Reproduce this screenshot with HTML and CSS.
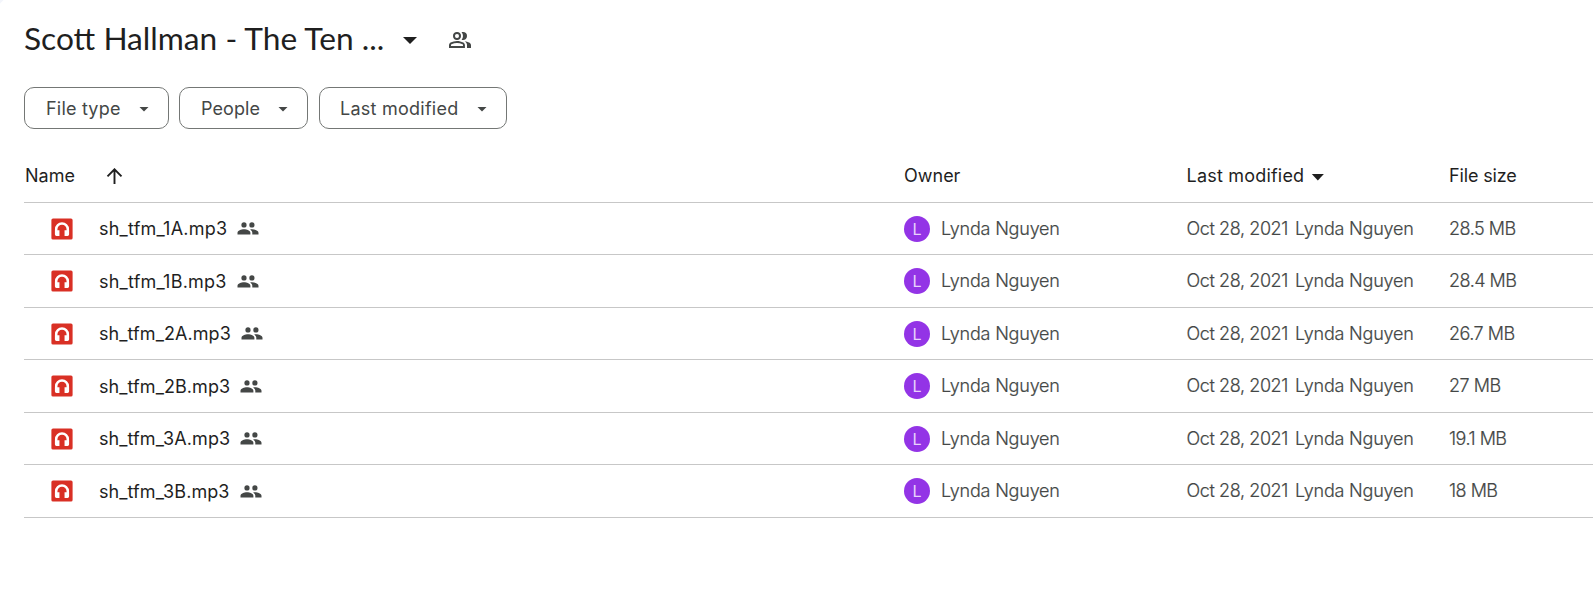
FILE: index.html
```html
<!DOCTYPE html>
<html lang="en">
<head>
<meta charset="utf-8">
<title>Scott Hallman - The Ten ...</title>
<link rel="stylesheet" href="styles.css">
</head>
<body>
<svg class="defs" width="0" height="0" aria-hidden="true">
  <symbol id="audio" viewBox="0 0 22 22">
    <rect x=".4" y=".4" width="21.2" height="21.2" rx="1.6" fill="#d93025"/>
    <path d="M5.200 16.500v-5.300a5.800 5.800 0 0 1 11.600 0v5.300" fill="none" stroke="#fff" stroke-width="2.500"/>
    <path d="M3.950 12.200h4.500v5.700H5.400a1.500 1.500 0 0 1-1.450-1.500zM13.550 12.200h4.500v4.200a1.500 1.500 0 0 1-1.450 1.500h-3.050z" fill="#fff"/>
  </symbol>
  <symbol id="shared" viewBox="0 0 22 13">
    <circle cx="7" cy="2.900" r="2.600"/><circle cx="14.900" cy="2.900" r="2.600"/>
    <path d="M.5 12.500v-1.700C.5 8.500 4.300 7.300 7 7.300s6.400 1.200 6.400 3.500v1.700zM13.100 7.500c.6-.1 1.300-.2 1.900-.2 2.700 0 6.500 1.200 6.500 3.500v1.700h-6.200v-1.700c0-1.500-.9-2.500-2.200-3.300z"/>
  </symbol>
</svg>
<main class="page">
  <header class="title-bar">
    <h1 class="title">Scott Hallman - The Ten ...</h1>
    <span class="caret caret-title"></span>
    <svg class="people" viewBox="0 0 24 24"><path d="M1 20v-2.800c0-.6.150-1.080.430-1.550.29-.47.670-.82 1.150-1.080 1-.5 2.020-.880 3.050-1.130A14 14 0 0 1 9 13c1.100 0 2.200.150 3.250.420 1.050.260 2.080.640 3.100 1.150.48.250.86.600 1.150 1.070.28.470.430.990.430 1.560V20zm18 0v-3c0-.730-.200-1.440-.610-2.110a5.200 5.200 0 0 0-1.740-1.740c.85.100 1.650.270 2.400.510.75.240 1.450.540 2.100.890.600.330 1.060.700 1.370 1.110.320.410.480.860.480 1.340v3zM9 12a3.850 3.850 0 0 1-4-4 3.850 3.850 0 0 1 4-4 3.850 3.850 0 0 1 4 4 3.850 3.850 0 0 1-4 4zm10-4a3.850 3.850 0 0 1-4 4c-.180 0-.420-.020-.700-.060a6 6 0 0 1-.700-.160A5.800 5.800 0 0 0 15 8a5.800 5.800 0 0 0-1.400-3.780c.230-.080.470-.140.700-.170.230-.030.470-.050.700-.050a3.850 3.850 0 0 1 4 4zM3 18h12v-.800a.940.940 0 0 0-.500-.850 12 12 0 0 0-2.720-1.010 11.500 11.500 0 0 0-5.560 0c-.920.220-1.820.560-2.720 1.010a.940.940 0 0 0-.500.850zm6-8a1.930 1.930 0 0 0 2-2 1.930 1.930 0 0 0-2-2 1.930 1.930 0 0 0-2 2 1.930 1.930 0 0 0 2 2z" fill-rule="evenodd"/></svg>
  </header>
  <nav class="chips">
    <div class="chip chip-type"><span>File type</span><i class="caret"></i></div>
    <div class="chip chip-people"><span>People</span><i class="caret"></i></div>
    <div class="chip chip-modified"><span>Last modified</span><i class="caret"></i></div>
  </nav>
  <section class="files">
    <div class="row head">
      <div class="name-head"><span>Name</span><svg class="arrow" viewBox="0 0 16 16"><path d="M8 16V1.500M1 8.300 8 1.300l7 7"/></svg></div>
      <div>Owner</div>
      <div class="sort">Last modified<i class="caret caret-sort"></i></div>
      <div>File size</div>
    </div>
    <div class="row">
      <div class="name wide"><svg class="audio"><use href="#audio"/></svg><span>sh_tfm_1A.mp3</span><svg class="shared"><use href="#shared"/></svg></div>
      <div class="owner"><b class="avatar">L</b><span>Lynda Nguyen</span></div>
      <div class="date"><span>Oct 28, 2021</span><span>Lynda Nguyen</span></div>
      <div class="size">28.5 MB</div>
    </div>
    <div class="row tall">
      <div class="name wide"><svg class="audio"><use href="#audio"/></svg><span>sh_tfm_1B.mp3</span><svg class="shared"><use href="#shared"/></svg></div>
      <div class="owner"><b class="avatar">L</b><span>Lynda Nguyen</span></div>
      <div class="date"><span>Oct 28, 2021</span><span>Lynda Nguyen</span></div>
      <div class="size">28.4 MB</div>
    </div>
    <div class="row">
      <div class="name"><svg class="audio"><use href="#audio"/></svg><span>sh_tfm_2A.mp3</span><svg class="shared"><use href="#shared"/></svg></div>
      <div class="owner"><b class="avatar">L</b><span>Lynda Nguyen</span></div>
      <div class="date"><span>Oct 28, 2021</span><span>Lynda Nguyen</span></div>
      <div class="size">26.7 MB</div>
    </div>
    <div class="row tall">
      <div class="name"><svg class="audio"><use href="#audio"/></svg><span>sh_tfm_2B.mp3</span><svg class="shared"><use href="#shared"/></svg></div>
      <div class="owner"><b class="avatar">L</b><span>Lynda Nguyen</span></div>
      <div class="date"><span>Oct 28, 2021</span><span>Lynda Nguyen</span></div>
      <div class="size">27 MB</div>
    </div>
    <div class="row">
      <div class="name"><svg class="audio"><use href="#audio"/></svg><span>sh_tfm_3A.mp3</span><svg class="shared"><use href="#shared"/></svg></div>
      <div class="owner"><b class="avatar">L</b><span>Lynda Nguyen</span></div>
      <div class="date"><span>Oct 28, 2021</span><span>Lynda Nguyen</span></div>
      <div class="size">19.1 MB</div>
    </div>
    <div class="row tall">
      <div class="name"><svg class="audio"><use href="#audio"/></svg><span>sh_tfm_3B.mp3</span><svg class="shared"><use href="#shared"/></svg></div>
      <div class="owner"><b class="avatar">L</b><span>Lynda Nguyen</span></div>
      <div class="date"><span>Oct 28, 2021</span><span>Lynda Nguyen</span></div>
      <div class="size">18 MB</div>
    </div>
  </section>
</main>
</body>
</html>
```
FILE: styles.css
```css
* { box-sizing: border-box; }
body {
  margin: 0;
  height: 591px;
  overflow: hidden;
  background: #f8fafd;
  color: #1f1f1f;
  font: 18px/24px Inter, sans-serif;
  white-space: nowrap;
}
.defs { display: block; }
.page {
  height: 591px;
  padding-left: 24px;
  background: linear-gradient(135deg, #f3f5fb 2px, #fff 3px);
}
.title-bar { display: flex; align-items: center; height: 80px; }
.title {
  width: 379px;
  margin: 0;
  padding-bottom: 4px;
  font: 400 31.700px/40px Lato, sans-serif;
}
.caret {
  width: 10px;
  height: 5px;
  background: currentColor;
  clip-path: polygon(0 0, 100% 0, 50% 100%);
}
.caret-title { width: 14px; height: 7px; margin-top: 1px; }
.people { width: 24px; height: 24px; margin-left: 31px; fill: #444746; }

.chips { display: flex; margin-top: 7px; color: #444746; letter-spacing: .1px; }
.chip {
  display: flex;
  align-items: center;
  justify-content: space-between;
  height: 42px;
  padding: 1px 19px 0 21px;
  border: 1px solid #747775;
  border-radius: 10px;
}
.chip .caret { margin-top: 1px; }
.chip-type { width: 145px; margin-right: 10px; letter-spacing: .2px; }
.chip-people { width: 129px; margin-right: 11px; }
.chip-modified { width: 188px; padding-left: 20px; letter-spacing: .25px; }

.row {
  display: grid;
  grid-template-columns: 880px 282.500px 262.500px 1fr;
  align-items: center;
  height: 52px;
  border-bottom: 1px solid #c7c7c7;
}
.tall { height: 53px; }
.head { height: 53px; margin-top: 21px; }
.name-head, .sort, .name, .owner, .date { display: flex; align-items: center; }
.name-head span { width: 82px; padding-left: 1px; }
.arrow { width: 17px; height: 16px; margin-top: -1px; fill: none; stroke: #1f1f1f; stroke-width: 1.900; }
.sort { letter-spacing: .2px; }
.caret-sort { width: 13px; height: 7px; margin: 2px 0 0 7px; }
.head > :last-child { letter-spacing: -.15px; }

.audio { width: 22px; height: 22px; margin: 0 26px 0 27px; }
.name span { letter-spacing: .07px; }
.name.wide span { letter-spacing: .23px; }
.tall .name span { padding-top: 2px; }
.shared { width: 22px; height: 13px; margin-left: 10px; fill: #444746; }
.owner, .date, .size {
  color: #444746;
  font-weight: 300;
  letter-spacing: -.2px;
  -webkit-text-stroke: .2px #444746;
}
.avatar {
  display: grid;
  place-items: center;
  width: 26px;
  height: 26px;
  margin-right: 11px;
  border-radius: 50%;
  background: #9334e6;
  color: #e9d3fb;
  font: 400 16px/26px Inter, sans-serif;
  -webkit-text-stroke: 0;
}
.date { gap: 7px; }
.date span:first-child { letter-spacing: -.4px; }
.size { letter-spacing: -.5px; }
```
